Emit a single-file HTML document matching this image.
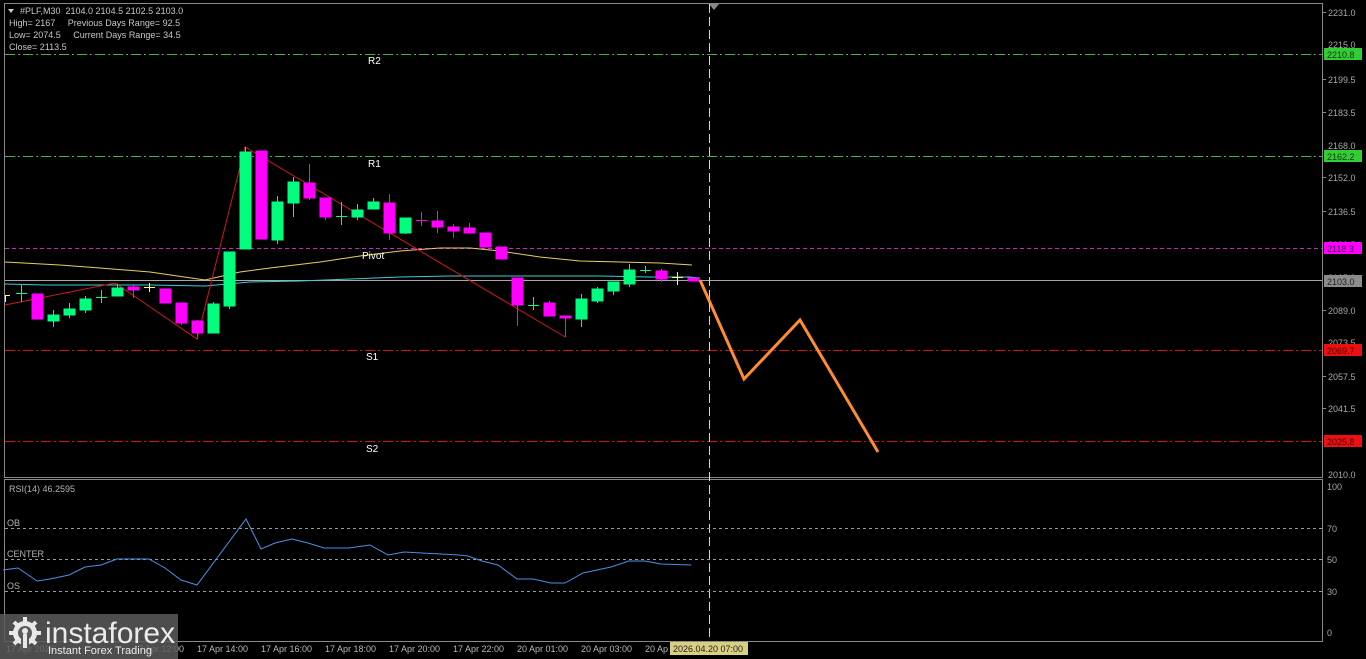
<!DOCTYPE html>
<html><head><meta charset="utf-8"><style>
html,body{margin:0;padding:0;background:#000;width:1366px;height:659px;overflow:hidden}
svg{display:block}
text{font-family:"Liberation Sans",sans-serif;white-space:pre}
</style></head><body>
<svg width="1366" height="659" viewBox="0 0 1366 659" xmlns="http://www.w3.org/2000/svg">
<rect width="1366" height="659" fill="#000"/>
<rect x="4.5" y="3.5" width="1318" height="474" fill="none" stroke="#8a8a8a"/>
<rect x="4.5" y="479.5" width="1318" height="162" fill="none" stroke="#8a8a8a"/>
<polygon points="709,4 719,4 714,10" fill="#888"/>
<g stroke-width="1" fill="none">
<line x1="5" y1="54.5" x2="1322" y2="54.5" stroke="#3cb83c" stroke-dasharray="10,3,2,3"/>
<line x1="5" y1="156.5" x2="1322" y2="156.5" stroke="#3cb83c" stroke-dasharray="10,3,2,3"/>
<line x1="5" y1="248.5" x2="1322" y2="248.5" stroke="#d020d0" stroke-dasharray="4,3"/>
<line x1="5" y1="350.5" x2="1322" y2="350.5" stroke="#d01818" stroke-dasharray="10,3,2,3"/>
<line x1="5" y1="441.5" x2="1322" y2="441.5" stroke="#d01818" stroke-dasharray="10,3,2,3"/>
<line x1="5" y1="280.5" x2="1322" y2="280.5" stroke="#a8a8a8"/>
</g>
<polyline points="5,262 60,265 100,268 150,272 205,280 240,272 270,268 320,262 360,256 400,251 440,248 470,248 500,251 540,257 580,261 620,262 660,263 692,265" fill="none" stroke="#e6d060" stroke-width="1"/>
<polyline points="5,284 45,285 100,285 150,285 205,286 250,282 300,281 350,279 400,277 450,276 520,276 600,276 650,277 690,277 700,278" fill="none" stroke="#40c8d8" stroke-width="1"/>
<polyline points="5,305 115,283 197,339 245,147 565,337" fill="none" stroke="#d01818" stroke-width="1"/>
<g stroke-width="1">
<g stroke="#00ff7f" fill="#00ff7f">
<line x1="21.5" y1="285" x2="21.5" y2="302"/><line x1="16" y1="293.5" x2="27" y2="293.5"/>
<line x1="53.5" y1="310" x2="53.5" y2="327"/><rect x="48" y="315" width="11" height="6"/>
<line x1="69.5" y1="303" x2="69.5" y2="318"/><rect x="64" y="309" width="11" height="6"/>
<line x1="85.5" y1="296" x2="85.5" y2="313"/><rect x="80" y="299" width="11" height="11"/>
<line x1="101.5" y1="290" x2="101.5" y2="303"/><line x1="96" y1="297.5" x2="107" y2="297.5"/>
<line x1="117.5" y1="284" x2="117.5" y2="296"/><rect x="112" y="288" width="11" height="8"/>
<line x1="213.5" y1="302" x2="213.5" y2="333"/><rect x="208" y="304" width="11" height="29"/>
<line x1="229.5" y1="252" x2="229.5" y2="309"/><rect x="224" y="252" width="11" height="54"/>
<line x1="245.5" y1="147" x2="245.5" y2="249"/><rect x="240" y="152" width="11" height="97"/>
<line x1="277.5" y1="196" x2="277.5" y2="244"/><rect x="272" y="202" width="11" height="38"/>
<line x1="293.5" y1="177" x2="293.5" y2="217"/><rect x="288" y="182" width="11" height="21"/>
<line x1="341.5" y1="202" x2="341.5" y2="225"/><line x1="336" y1="216.5" x2="347" y2="216.5"/>
<line x1="357.5" y1="204" x2="357.5" y2="220"/><rect x="352" y="210" width="11" height="7"/>
<line x1="373.5" y1="198" x2="373.5" y2="209"/><rect x="368" y="202" width="11" height="7"/>
<line x1="405.5" y1="218" x2="405.5" y2="234"/><rect x="400" y="218" width="11" height="15"/>
<line x1="533.5" y1="297" x2="533.5" y2="310"/><line x1="528" y1="305.5" x2="539" y2="305.5"/>
<line x1="581.5" y1="294" x2="581.5" y2="327"/><rect x="576" y="299" width="11" height="20"/>
<line x1="597.5" y1="287" x2="597.5" y2="303"/><rect x="592" y="289" width="11" height="12"/>
<line x1="613.5" y1="282" x2="613.5" y2="295"/><rect x="608" y="282" width="11" height="9"/>
<line x1="629.5" y1="264" x2="629.5" y2="287"/><rect x="624" y="270" width="11" height="14"/>
<line x1="645.5" y1="266" x2="645.5" y2="273"/><line x1="640" y1="270.5" x2="651" y2="270.5"/>
</g>
<g stroke="#ff00ff" fill="#ff00ff">
<rect x="32" y="294" width="11" height="25"/>
<line x1="133.5" y1="284" x2="133.5" y2="298"/><rect x="128" y="287" width="11" height="3"/>
<rect x="160" y="289" width="11" height="14"/>
<line x1="181.5" y1="303" x2="181.5" y2="325"/><rect x="176" y="303" width="11" height="20"/>
<line x1="197.5" y1="320" x2="197.5" y2="339"/><rect x="192" y="321" width="11" height="12"/>
<rect x="256" y="151" width="11" height="88"/>
<line x1="309.5" y1="164" x2="309.5" y2="200"/><rect x="304" y="183" width="11" height="15"/>
<line x1="325.5" y1="198" x2="325.5" y2="220"/><rect x="320" y="198" width="11" height="19"/>
<line x1="389.5" y1="194" x2="389.5" y2="240"/><rect x="384" y="203" width="11" height="30"/>
<line x1="421.5" y1="212" x2="421.5" y2="226"/><line x1="416" y1="220.5" x2="427" y2="220.5"/>
<line x1="437.5" y1="211" x2="437.5" y2="233"/><rect x="432" y="221" width="11" height="6"/>
<line x1="453.5" y1="224" x2="453.5" y2="238"/><rect x="448" y="227" width="11" height="4"/>
<line x1="469.5" y1="223" x2="469.5" y2="233"/><rect x="464" y="228" width="11" height="5"/>
<rect x="480" y="233" width="11" height="14"/>
<rect x="496" y="247" width="11" height="12"/>
<line x1="517.5" y1="278" x2="517.5" y2="326"/><rect x="512" y="278" width="11" height="27"/>
<line x1="549.5" y1="301" x2="549.5" y2="316"/><rect x="544" y="303" width="11" height="13"/>
<line x1="565.5" y1="316" x2="565.5" y2="337"/><rect x="560" y="316" width="11" height="2"/>
<line x1="661.5" y1="269" x2="661.5" y2="282"/><rect x="656" y="271" width="11" height="8"/>
<rect x="688" y="278" width="11" height="3"/>
</g>
<g stroke="#ffff60">
<line x1="149.5" y1="283" x2="149.5" y2="292"/><line x1="144" y1="287.5" x2="155" y2="287.5"/>
<line x1="677.5" y1="272" x2="677.5" y2="285"/><line x1="672" y1="277.5" x2="683" y2="277.5"/>
<line x1="5.5" y1="295" x2="5.5" y2="302"/><line x1="5" y1="295.5" x2="10" y2="295.5"/>
</g>
</g>
<polyline points="700,280 744,379 800,320 878,452" fill="none" stroke="#ff8c30" stroke-width="3"/>
<line x1="709.5" y1="4" x2="709.5" y2="641" stroke="#d8d8c0" stroke-dasharray="9,4"/>
<g fill="#fff" font-size="10">
<text x="368" y="64">R2</text><text x="368" y="167">R1</text><text x="362" y="259">Pivot</text>
<text x="366" y="360">S1</text><text x="366" y="452">S2</text>
</g>
<g fill="#c8c8c8" font-size="9">
<polygon points="8,9 14,9 11,13" fill="#c8c8c8"/>
<text x="20" y="14">#PLF,M30  2104.0 2104.5 2102.5 2103.0</text>
<text x="9" y="26">High= 2167     Previous Days Range= 92.5</text>
<text x="9" y="38">Low= 2074.5     Current Days Range= 34.5</text>
<text x="9" y="50">Close= 2113.5</text>
</g>
<g fill="#a8a8a8" font-size="9">
<text x="1328" y="16">2231.0</text><text x="1328" y="48">2215.0</text><text x="1328" y="83">2199.5</text>
<text x="1328" y="116">2183.5</text><text x="1328" y="149">2168.0</text><text x="1328" y="181">2152.0</text>
<text x="1328" y="215">2136.5</text><text x="1328" y="248">2120.5</text><text x="1328" y="281">2105.0</text>
<text x="1328" y="314">2089.0</text><text x="1328" y="346">2073.5</text><text x="1328" y="380">2057.5</text>
<text x="1328" y="412">2041.5</text><text x="1328" y="478">2010.0</text>
<text x="1327" y="490">100</text><text x="1327" y="532">70</text><text x="1327" y="563">50</text><text x="1327" y="595">30</text><text x="1327" y="636">0</text>
</g>
<g stroke="#8a8a8a"><line x1="1323" y1="12.5" x2="1326" y2="12.5"/><line x1="1323" y1="79.5" x2="1326" y2="79.5"/><line x1="1323" y1="112.5" x2="1326" y2="112.5"/><line x1="1323" y1="177.5" x2="1326" y2="177.5"/><line x1="1323" y1="211.5" x2="1326" y2="211.5"/><line x1="1323" y1="310.5" x2="1326" y2="310.5"/><line x1="1323" y1="376.5" x2="1326" y2="376.5"/><line x1="1323" y1="408.5" x2="1326" y2="408.5"/></g>
<g font-size="9">
<rect x="1324" y="48" width="38" height="12" fill="#32cd32"/><text x="1327" y="58" fill="#113311">2210.8</text>
<rect x="1324" y="150" width="38" height="12" fill="#32cd32"/><text x="1327" y="160" fill="#113311">2162.2</text>
<rect x="1324" y="242" width="38" height="12" fill="#ff00ff"/><text x="1327" y="252" fill="#440044">2118.3</text>
<rect x="1324" y="275" width="38" height="12" fill="#8c8c8c"/><text x="1327" y="285" fill="#222">2103.0</text>
<rect x="1324" y="344" width="38" height="12" fill="#ee1010"/><text x="1327" y="354" fill="#440000">2069.7</text>
<rect x="1324" y="435" width="38" height="12" fill="#ee1010"/><text x="1327" y="445" fill="#440000">2025.8</text>
</g>
<g stroke="#9a9a9a" stroke-dasharray="3,3">
<line x1="5" y1="528.5" x2="1322" y2="528.5"/><line x1="5" y1="559.5" x2="1322" y2="559.5"/><line x1="5" y1="591.5" x2="1322" y2="591.5"/>
</g>
<g fill="#b4b4b4" font-size="9">
<text x="9" y="492">RSI(14) 46.2595</text><text x="7" y="526">OB</text><text x="7" y="557">CENTER</text><text x="7" y="589">OS</text>
</g>
<polyline points="3,570 18,568 37,581 50,579 69,575 85,567 101,565 117,559 149,559 165,568 181,580 197,585 246,519 261,549 275,543 292,539 308,543 324,548 349,548 370,545 388,555 404,552 422,553 441,554 459,555 468,556 482,561 498,565 517,579 533,579 551,583 565,583 583,573 611,567 629,561 645,561 661,564 691,565" fill="none" stroke="#4a90e8" stroke-width="1"/>
<g fill="#b8b8b8" font-size="9">
<text x="6" y="652">17 Apr 2026</text><text x="133" y="652">17 Apr 12:00</text>
<text x="197" y="652">17 Apr 14:00</text><text x="261" y="652">17 Apr 16:00</text><text x="325" y="652">17 Apr 18:00</text>
<text x="389" y="652">17 Apr 20:00</text><text x="453" y="652">17 Apr 22:00</text><text x="517" y="652">20 Apr 01:00</text>
<text x="581" y="652">20 Apr 03:00</text><text x="645" y="652">20 Ap</text>
</g>
<rect x="670" y="642" width="78" height="13" fill="#d8d080"/>
<text x="673" y="652" fill="#222" font-size="9">2026.04.20 07:00</text>
<rect x="0" y="614" width="178" height="45" fill="#5a5a5a" fill-opacity="0.85"/>
<g fill="#e8e8e8">
<circle cx="25" cy="633" r="12"/>
<g stroke="#e8e8e8" stroke-width="4">
<line x1="25" y1="617" x2="25" y2="649"/><line x1="9" y1="633" x2="41" y2="633"/>
<line x1="14" y1="622" x2="36" y2="644"/><line x1="36" y1="622" x2="14" y2="644"/>
</g>
<circle cx="25" cy="633" r="7" fill="#5a5a5a"/>
<rect x="21" y="633" width="8" height="16" fill="#5a5a5a"/>
<circle cx="25" cy="631" r="3"/>
<rect x="23" y="634" width="4" height="14"/>
</g>
<text x="45" y="643" fill="#ececec" font-size="30">instaforex</text>
<text x="48" y="654" fill="#ececec" font-size="11">Instant Forex Trading</text>
</svg>
</body></html>
